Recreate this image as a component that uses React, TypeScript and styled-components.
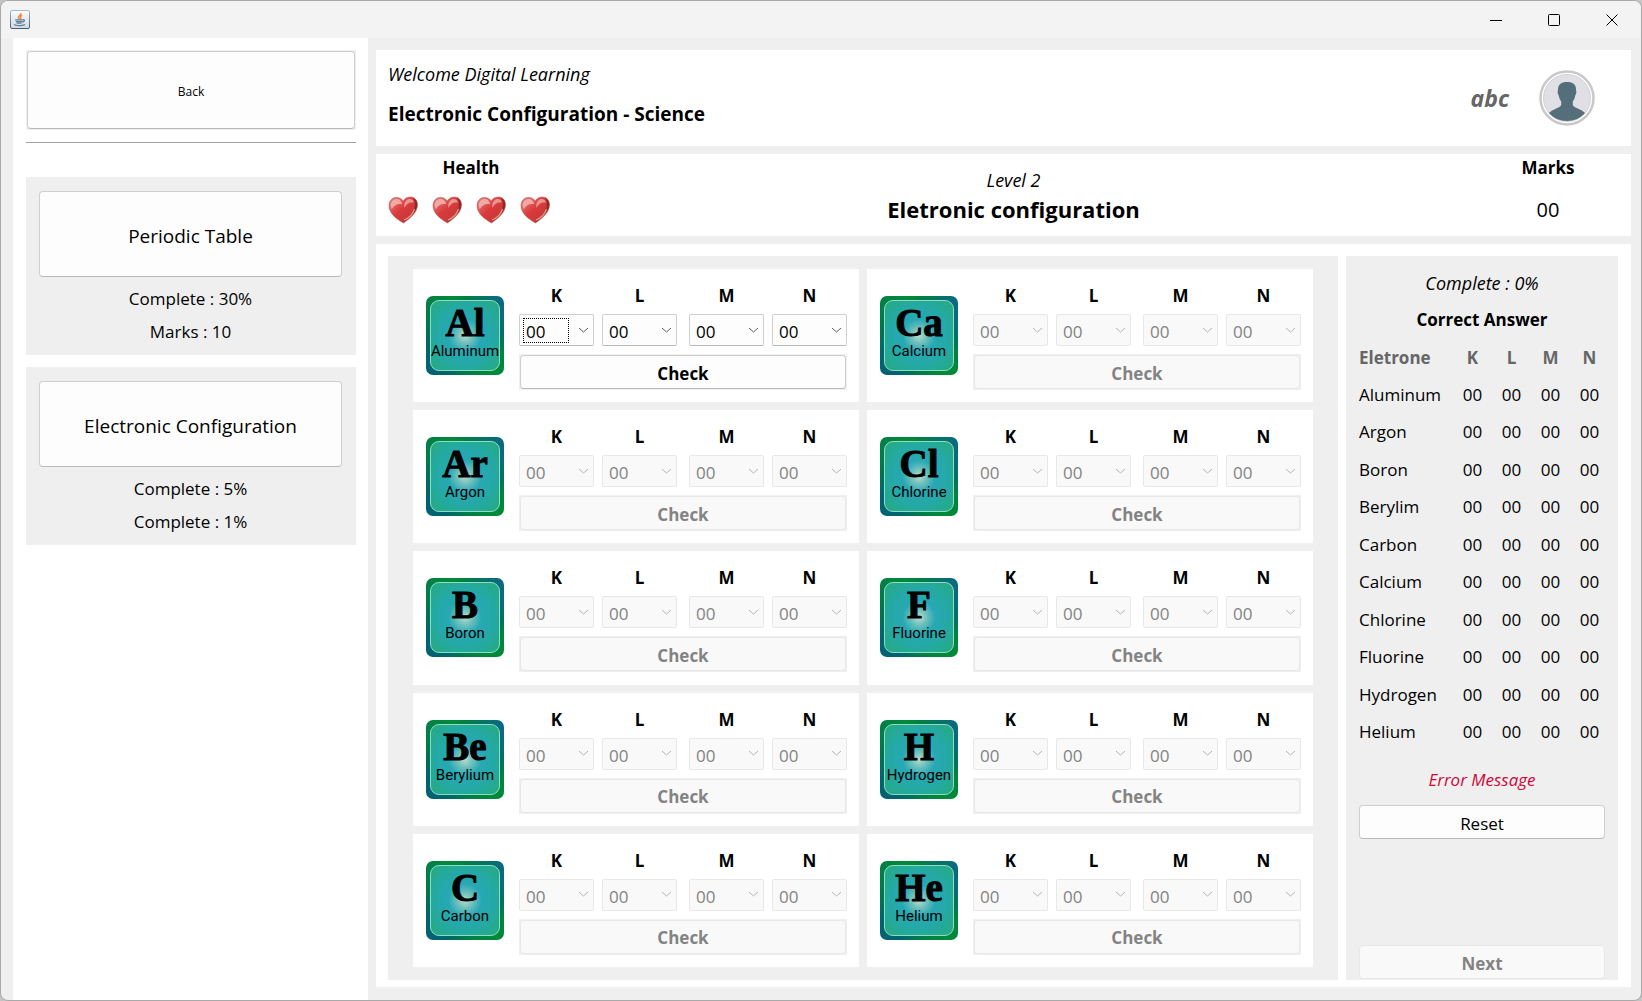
import React from "react";
import styled, { createGlobalStyle } from "styled-components";

const GlobalStyle = createGlobalStyle`
  *, *::before, *::after { box-sizing: border-box; }
  html, body, #root { height: 100%; }
  body {
    margin: 0;
    background: #c4c4c4;
    color: #000;
    font-family: "Segoe UI", "Open Sans", "Noto Sans", sans-serif;
    font-size: 17px;
    line-height: 24px;
  }
  button, select { font: inherit; color: inherit; margin: 0; }
  h1, h2, p { margin: 0; font: inherit; }
`;

const AppWindow = styled.div`
  display: flex;
  flex-direction: column;
  min-height: 100vh;
  background: #efefef;
  border: 1px solid #a9a9a9;
  border-radius: 8px;
  overflow: hidden;
`;

const TitleBar = styled.header`
  display: flex;
  align-items: center;
  justify-content: space-between;
  height: 37px;
  flex: none;
  background: #f3f3f3;
  padding-left: 9px;
`;

const WindowControls = styled.div`
  display: flex;
`;

const WindowButton = styled.button`
  display: grid;
  place-items: center;
  width: 58px;
  height: 36px;
  padding: 0;
  border: 0;
  background: none;
`;

const Body = styled.div`
  display: flex;
  flex: 1;
  gap: 8px;
  padding: 0 10px 0 12px;
`;

const Sidebar = styled.nav`
  flex: none;
  width: 355px;
  padding: 12px 12px 12px 13px;
  background: #fff;
`;

const PushButton = styled.button<{ $height: number; $size?: number; $bold?: boolean }>`
  display: block;
  width: 100%;
  height: ${(p) => p.$height}px;
  padding: 3px 0 0;
  border: 1px solid #cfcfcf;
  border-bottom-color: #b9b9b9;
  border-radius: 4px;
  background: #fdfdfd;
  font-size: ${(p) => p.$size ?? 17}px;
  font-weight: ${(p) => (p.$bold ? 700 : 400)};
  &:disabled {
    color: #838383;
    background: #f9f9f9;
    border-color: #e8e8e8;
  }
`;

const ButtonSlot = styled.div`
  padding: 1px;
  background: #efefef;
`;

const Separator = styled.hr`
  margin: 12px 0 34px;
  border: 0;
  border-top: 1px solid #a0a0a0;
`;

const TopicList = styled.ul`
  display: flex;
  flex-direction: column;
  gap: 12px;
  margin: 0;
  padding: 0;
  list-style: none;
`;

const Topic = styled.li`
  height: 178px;
  padding: 14px 14px 0 13px;
  background: #efefef;
  text-align: center;
`;

const TopicInfo = styled.div`
  display: flex;
  flex-direction: column;
  gap: 9px;
  padding-top: 10px;
`;

const Main = styled.main`
  display: flex;
  flex-direction: column;
  flex: 1;
  gap: 8px;
  min-width: 0;
  padding: 12px 0 13px;
`;

const Header = styled.section`
  display: flex;
  align-items: center;
  justify-content: space-between;
  height: 96px;
  flex: none;
  padding: 0 36px 0 12px;
  background: #fff;
`;

const Headings = styled.div`
  display: flex;
  flex-direction: column;
  gap: 16px;
  padding-bottom: 8px;
`;

const Italic = styled.p`
  font-size: 18px;
  font-style: italic;
`;

const Title = styled.h1`
  font-size: 19px;
  font-weight: 700;
`;

const User = styled.div`
  display: flex;
  align-items: center;
  gap: 30px;
`;

const UserName = styled.span`
  color: #666;
  font-size: 23px;
  font-weight: 700;
  font-style: italic;
`;

const Stats = styled.section`
  display: grid;
  grid-template-columns: 174px 1fr 166px;
  height: 82px;
  flex: none;
  padding: 0 0 0 12px;
  background: #fff;
  text-align: center;
`;

const Stat = styled.div`
  display: flex;
  flex-direction: column;
  gap: 16px;
  width: 166px;
  padding-top: 2px;
`;

const StatLabel = styled.h2`
  font-weight: 700;
`;

const StatValue = styled.p`
  font-size: 20px;
  line-height: 28px;
`;

const Hearts = styled.div`
  display: flex;
  gap: 14px;
`;

const LevelInfo = styled.div`
  padding-top: 14px;
`;

const LevelTitle = styled.h2`
  font-size: 22px;
  font-weight: 700;
  line-height: 34px;
`;

const Workspace = styled.section`
  display: flex;
  flex: 1;
  gap: 8px;
  padding: 12px 13px 7px 12px;
  background: #fff;
`;

const Quiz = styled.div`
  display: grid;
  flex: 1;
  grid-template-columns: 1fr 1fr;
  grid-auto-rows: 1fr;
  gap: 8px;
  padding: 13px 25px;
  background: #efefef;
`;

const QuizCard = styled.form`
  display: flex;
  gap: 15px;
  padding: 12px 12px 12px 13px;
  background: #fff;
`;

const Tile = styled.div`
  flex: none;
  width: 78px;
  height: 79px;
  margin-top: 15px;
  padding: 4px;
  border-radius: 7px;
  background: conic-gradient(from 45deg, #0a6a80, #0a6a80 4%, #00745c 14%, #00853c 20%, #008a38 28%, #007a4c 38%, #006372 46%, #006372 54%, #00734f 64%, #007f48 74%, #008a38 82%, #008040 88%, #0a6a80);
`;

const TileFace = styled.div`
  display: flex;
  flex-direction: column;
  align-items: center;
  height: 100%;
  border: 1px solid #8fdcc4;
  border-radius: 9px;
  background: radial-gradient(circle at 50% 50%, #b9dccb 0%, #6fc0bd 16%, #27a8b4 34%, #24a9a6 60%, #25aa87 90%);
`;

const TileSymbol = styled.span`
  font-family: "Liberation Serif", serif;
  font-size: 39px;
  font-weight: 700;
  line-height: 43px;
  -webkit-text-stroke: 1px #000;
`;

const TileName = styled.span`
  font-family: Roboto, sans-serif;
  font-size: 15px;
  line-height: 14px;
`;

const Answer = styled.div`
  display: flex;
  flex-direction: column;
  flex: 1;
  gap: 8px;
  min-width: 0;
`;

const ShellFields = styled.div`
  display: flex;
  gap: 12px;
`;

const ShellPair = styled.div`
  display: flex;
  flex: 1;
  gap: 8px;
`;

const ShellLabel = styled.label`
  display: flex;
  flex: 1;
  flex-direction: column;
  gap: 6px;
  min-width: 0;
  padding-top: 3px;
  font-weight: 700;
  text-align: center;
`;

const SelectBox = styled.span`
  display: grid;
  align-items: center;
  & > * { grid-area: 1 / 1; }
  & > svg { justify-self: end; margin-right: 5px; pointer-events: none; }
`;

const Select = styled.select`
  appearance: none;
  width: 100%;
  height: 32px;
  padding: 4px 0 0 6px;
  border: 1px solid #cfcfcf;
  border-bottom-color: #b9b9b9;
  border-radius: 2px;
  background: #fdfdfd;
  font-weight: 400;
  &:disabled {
    color: #838383;
    opacity: 1;
    background: #f9f9f9;
    border-color: #e8e8e8;
  }
`;

const FocusRing = styled.i`
  width: 46px;
  height: 25px;
  margin-left: 4px;
  border: 1px dotted #000;
  pointer-events: none;
`;

const Results = styled.aside`
  display: flex;
  flex: none;
  flex-direction: column;
  width: 272px;
  padding: 15px 13px 1px;
  background: #efefef;
  text-align: center;
`;

const ResultsTitle = styled.h2`
  margin: 13px 0 7px;
  font-weight: 700;
`;

const TableWrap = styled.div`
  margin-right: -4px;
`;

const ResultsTable = styled.table`
  width: 100%;
  height: 412px;
  border-collapse: collapse;
  table-layout: fixed;
  th, td { padding: 0; width: 39px; height: 37px; text-align: center; }
  thead th { color: #666; font-weight: 700; }
  th:first-child { width: auto; text-align: left; }
  tbody th { font-weight: 400; }
`;

const ErrorText = styled.p`
  margin: 17px 0 13px;
  color: #d0063a;
  font-style: italic;
`;

const Spacer = styled.div`
  flex: 1;
`;

const JavaIcon = () => (
  <svg width="20" height="19" viewBox="0 0 20 19" aria-hidden="true">
    <defs>
      <linearGradient id="jv" x1="0" y1="0" x2="0" y2="1">
        <stop offset="0" stopColor="#fafbfc" />
        <stop offset="1" stopColor="#d3d9df" />
      </linearGradient>
      <linearGradient id="jvEdge" x1="0" y1="0" x2="0" y2="1">
        <stop offset="0" stopColor="#a9b8c6" />
        <stop offset="1" stopColor="#3f5f7c" />
      </linearGradient>
    </defs>
    <rect x="0.5" y="0.5" width="19" height="18" rx="1.5" fill="url(#jv)" stroke="url(#jvEdge)" />
    <path d="M10.800 3c1 1.600-2.600 2.600-2.400 4.200.1.900 1.200 1.400 1.300 2M12.200 5.200c-1.500.7-2.200 1.400-1.600 2.200.4.600.2 1.200-.4 1.600" fill="none" stroke="#ee8a3c" strokeWidth="1.500" />
    <path d="M5.200 9.800h7.600M5.800 11.600h6.600M6.600 13.200h5M13 9.700c2-.3 1.900 2-.6 2.400" fill="none" stroke="#5b7f9c" strokeWidth="1.300" />
    <path d="M4 14.600c2.500 1.400 8.500 1.200 11-.2" fill="none" stroke="#5b7f9c" strokeWidth="1.200" />
  </svg>
);

const Heart = ({ index }: { index: number }) => (
  <svg width="30" height="28" viewBox="0 0 30 28" aria-hidden="true">
    <defs>
      <linearGradient id={`heart${index}`} x1="0" y1="0" x2="1" y2="1">
        <stop offset="0" stopColor="#e08b86" />
        <stop offset="0.450" stopColor="#db3a3c" />
        <stop offset="0.700" stopColor="#cc3838" />
        <stop offset="1" stopColor="#8f2a26" />
      </linearGradient>
    </defs>
    <path d="M15.500 27C9 23.500 1 17.500 1 9.800 1 4.700 4 1.400 8.500 1.400c3 0 5.400 1.200 6.700 3.600C16.700 2.400 19.500 1 22.300 1c4.400 0 7.200 3.300 7.200 8 0 7.500-8 13.800-14 18z" fill={`url(#heart${index})`} stroke="#c0605a" strokeWidth="0.600" />
    <path d="M25 1.800c3 1.200 4.500 3.800 4.300 7-.3 6.200-6.500 11.900-13.500 17.200 4.500-5.200 10.500-9.700 11-16.200.2-3-.3-5.900-1.800-8z" fill="#7d2a22" opacity="0.850" />
    <path d="M2.500 9.500C2.700 5.500 5.500 3 8.800 3c2.900 0 4.900 2 5.400 5.200C11 7.500 6.500 8 3.800 13.500z" fill="#f3b6b0" opacity="0.850" />
    <path d="M16.200 8.500c.8-3.800 3.500-5.800 6.300-5.400 2 .3 3.100 1.800 3.100 3.700-3.200-.9-6.600.2-9.200 5.200z" fill="#eda39d" opacity="0.850" />
    <path d="M16 24c5-2 9-6.300 10.500-11" fill="none" stroke="#eeb0a6" strokeWidth="1.200" opacity="0.850" />
  </svg>
);

const Avatar = () => (
  <svg width="56" height="56" viewBox="0 0 56 56" role="img" aria-label="Profile">
    <circle cx="28" cy="28" r="26.500" fill="#fff" stroke="#c8c8c8" strokeWidth="2.500" />
    <circle cx="28" cy="28" r="23.500" fill="#e0dfe3" stroke="#d2d1d4" strokeWidth="1" />
    <path d="M28 12c6 0 9 2.600 9 7.500 0 1.200.5 1.500.3 3.200-.2 1.600-.9 2.200-1.200 3.300-.4 2.400-1.200 4-2.300 5.300v4c2 3 8.700 4 12.200 7.700C41.800 48 35.300 51 28 51s-13.800-3-18-8c3.500-3.700 10.200-4.700 12.200-7.700v-4c-1.100-1.300-1.900-2.900-2.300-5.300-.3-1.100-1-1.700-1.200-3.300-.2-1.700.3-2 .3-3.200 0-4.900 3-7.500 9-7.500z" fill="#546e7a" />
  </svg>
);

const Chevron = ({ color }: { color: string }) => (
  <svg width="11" height="7" viewBox="0 0 11 7" aria-hidden="true">
    <path d="M1 1l4.500 4 4.500-4" fill="none" stroke={color} />
  </svg>
);

const topics = [
  { name: "Periodic Table", info: ["Complete : 30%", "Marks : 10"] },
  { name: "Electronic Configuration", info: ["Complete : 5%", "Complete : 1%"] },
];

const elements = [
  ["Al", "Aluminum"], ["Ca", "Calcium"],
  ["Ar", "Argon"], ["Cl", "Chlorine"],
  ["B", "Boron"], ["F", "Fluorine"],
  ["Be", "Berylium"], ["H", "Hydrogen"],
  ["C", "Carbon"], ["He", "Helium"],
];

const answers = [
  "Aluminum", "Argon", "Boron", "Berylim", "Carbon",
  "Calcium", "Chlorine", "Fluorine", "Hydrogen", "Helium",
];

const shells = ["K", "L", "M", "N"];

function ShellField({ shell, disabled, focused }: { shell: string; disabled: boolean; focused: boolean }) {
  return (
    <ShellLabel>
      <span>{shell}</span>
      <SelectBox>
        <Select disabled={disabled}>
          <option>00</option>
        </Select>
        <Chevron color={disabled ? "#b4b4b4" : "#5c5c5c"} />
        {focused && <FocusRing />}
      </SelectBox>
    </ShellLabel>
  );
}

function ElementCard({ symbol, name, active }: { symbol: string; name: string; active: boolean }) {
  const field = (shell: string) => (
    <ShellField key={shell} shell={shell} disabled={!active} focused={active && shell === "K"} />
  );
  return (
    <QuizCard onSubmit={(e) => e.preventDefault()}>
      <Tile>
        <TileFace>
          <TileSymbol>{symbol}</TileSymbol>
          <TileName>{name}</TileName>
        </TileFace>
      </Tile>
      <Answer>
        <ShellFields>
          <ShellPair>{shells.slice(0, 2).map(field)}</ShellPair>
          <ShellPair>{shells.slice(2).map(field)}</ShellPair>
        </ShellFields>
        <ButtonSlot>
          <PushButton $height={34} $bold disabled={!active}>Check</PushButton>
        </ButtonSlot>
      </Answer>
    </QuizCard>
  );
}

export default function App() {
  return (
    <>
      <GlobalStyle />
      <AppWindow>
        <TitleBar>
          <JavaIcon />
          <WindowControls>
            <WindowButton aria-label="Minimize">
              <svg width="12" height="12"><path d="M0 6.500h12" stroke="#000" /></svg>
            </WindowButton>
            <WindowButton aria-label="Maximize">
              <svg width="12" height="12"><rect x="0.500" y="0.500" width="11" height="11" rx="1" fill="none" stroke="#000" /></svg>
            </WindowButton>
            <WindowButton aria-label="Close">
              <svg width="12" height="12"><path d="M.5.500l11 11M11.500.500l-11 11" stroke="#000" /></svg>
            </WindowButton>
          </WindowControls>
        </TitleBar>
        <Body>
          <Sidebar>
            <ButtonSlot>
              <PushButton $height={78} $size={12}>Back</PushButton>
            </ButtonSlot>
            <Separator />
            <TopicList>
              {topics.map((t) => (
                <Topic key={t.name}>
                  <PushButton $height={86} $size={19}>{t.name}</PushButton>
                  <TopicInfo>
                    {t.info.map((line) => <p key={line}>{line}</p>)}
                  </TopicInfo>
                </Topic>
              ))}
            </TopicList>
          </Sidebar>
          <Main>
            <Header>
              <Headings>
                <Italic>Welcome Digital Learning</Italic>
                <Title>Electronic Configuration - Science</Title>
              </Headings>
              <User>
                <UserName>abc</UserName>
                <Avatar />
              </User>
            </Header>
            <Stats>
              <Stat>
                <StatLabel>Health</StatLabel>
                <Hearts>{[0, 1, 2, 3].map((i) => <Heart key={i} index={i} />)}</Hearts>
              </Stat>
              <LevelInfo>
                <Italic>Level 2</Italic>
                <LevelTitle>Eletronic configuration</LevelTitle>
              </LevelInfo>
              <Stat>
                <StatLabel>Marks</StatLabel>
                <StatValue>00</StatValue>
              </Stat>
            </Stats>
            <Workspace>
              <Quiz>
                {elements.map(([symbol, name], i) => (
                  <ElementCard key={symbol} symbol={symbol} name={name} active={i === 0} />
                ))}
              </Quiz>
              <Results>
                <Italic>Complete : 0%</Italic>
                <ResultsTitle>Correct Answer</ResultsTitle>
                <TableWrap>
                  <ResultsTable>
                    <thead>
                      <tr>
                        <th scope="col">Eletrone</th>
                        {shells.map((s) => <th key={s} scope="col">{s}</th>)}
                      </tr>
                    </thead>
                    <tbody>
                      {answers.map((name) => (
                        <tr key={name}>
                          <th scope="row">{name}</th>
                          {shells.map((s) => <td key={s}>00</td>)}
                        </tr>
                      ))}
                    </tbody>
                  </ResultsTable>
                </TableWrap>
                <ErrorText>Error Message</ErrorText>
                <PushButton $height={34}>Reset</PushButton>
                <Spacer />
                <PushButton $height={34} $bold disabled>Next</PushButton>
              </Results>
            </Workspace>
          </Main>
        </Body>
      </AppWindow>
    </>
  );
}
